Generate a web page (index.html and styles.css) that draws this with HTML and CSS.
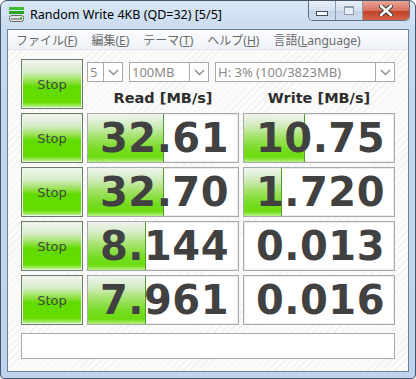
FILE: index.html
```html
<!DOCTYPE html>
<html lang="ja">
<head>
  <meta charset="UTF-8">
  <title>Random Write 4KB (QD=32) [5/5]</title>
  <link rel="stylesheet" href="styles.css">
</head>
<body>
  <div class="window">
    <div class="titlebar">
      <svg class="app-icon" width="17" height="17" viewBox="0 0 17 17">
        <rect x="1" y="1" width="15" height="3" fill="#3cbc2c"/>
        <rect x="1" y="5" width="15" height="3" fill="#2aa51e"/>
        <rect x="1.5" y="9.5" width="14" height="6" rx="2" fill="#e4e4e4" stroke="#6a6a6a"/>
        <rect x="3" y="12" width="11" height="2" fill="#9a9a9a"/>
        <rect x="12" y="11" width="2" height="2" fill="#2ec21e"/>
      </svg>
      <span class="title">Random Write 4KB (QD=32) [5/5]</span>
      <div class="caption-buttons">
        <div class="cap-btn cap-min"><span class="glyph-min"></span></div>
        <div class="cap-btn cap-max"><span class="glyph-max"></span></div>
        <div class="cap-btn cap-close">
          <svg width="14" height="11" viewBox="0 0 14 11">
            <path d="M2 1 L12 10 M12 1 L2 10" stroke="#3c3c3c" stroke-width="4.5" stroke-linecap="round"/>
            <path d="M2 1 L12 10 M12 1 L2 10" stroke="#ffffff" stroke-width="2.4" stroke-linecap="round"/>
          </svg>
        </div>
      </div>
    </div>

    <div class="client">
      <div class="menubar">
        <span class="menu-item">ファイル(<u>F</u>)</span>
        <span class="menu-item">編集(<u>E</u>)</span>
        <span class="menu-item">テーマ(<u>T</u>)</span>
        <span class="menu-item">ヘルプ(<u>H</u>)</span>
        <span class="menu-item">言語(<u>L</u>anguage)</span>
      </div>

      <div class="panel">
        <button class="stop">Stop</button>
        <div class="settings">
          <div class="combos">
            <div class="combo combo-count"><span class="combo-value">5</span><span class="combo-arrow"><svg width="11" height="7" viewBox="0 0 11 7"><path d="M1 1 L5.5 5.5 L10 1" fill="none" stroke="#8a8a8a" stroke-width="1.4"/></svg></span></div>
            <div class="combo combo-size"><span class="combo-value">100MB</span><span class="combo-arrow"><svg width="11" height="7" viewBox="0 0 11 7"><path d="M1 1 L5.5 5.5 L10 1" fill="none" stroke="#8a8a8a" stroke-width="1.4"/></svg></span></div>
            <div class="combo combo-drive"><span class="combo-value">H: 3% (100/3823MB)</span><span class="combo-arrow"><svg width="11" height="7" viewBox="0 0 11 7"><path d="M1 1 L5.5 5.5 L10 1" fill="none" stroke="#8a8a8a" stroke-width="1.4"/></svg></span></div>
          </div>
          <div class="headers">
            <div class="col-head">Read [MB/s]</div>
            <div class="col-head">Write [MB/s]</div>
          </div>
        </div>

        <button class="stop">Stop</button>
        <div class="cell"><div class="bar" style="width: 50%"></div><span class="value">32.61</span></div>
        <div class="cell"><div class="bar" style="width: 40%"></div><span class="value">10.75</span></div>

        <button class="stop">Stop</button>
        <div class="cell"><div class="bar" style="width: 50%"></div><span class="value">32.70</span></div>
        <div class="cell"><div class="bar" style="width: 24.7%"></div><span class="value">1.720</span></div>

        <button class="stop">Stop</button>
        <div class="cell"><div class="bar" style="width: 38%"></div><span class="value">8.144</span></div>
        <div class="cell"><span class="value">0.013</span></div>

        <button class="stop">Stop</button>
        <div class="cell"><div class="bar" style="width: 38%"></div><span class="value">7.961</span></div>
        <div class="cell"><span class="value">0.016</span></div>

        <div class="status"></div>
      </div>
    </div>
  </div>
</body>
</html>
```

FILE: styles.css
```css
body {
  margin: 0;
  font-family: "Noto Sans", "Noto Sans CJK JP", sans-serif;
  background: #ffffff;
}

.window {
  width: 416px;
  height: 379px;
  box-sizing: border-box;
  border: 1px solid #44566c;
  border-radius: 7px 7px 4px 4px;
  background: linear-gradient(#d9e6f5, #c4d8ef 40px, #bfd4ec);
  padding: 0 6px 6px 6px;
  display: flex;
  flex-direction: column;
}

/* title bar */
.titlebar {
  height: 28px;
  display: flex;
  align-items: flex-start;
}

.app-icon {
  margin: 5px 5px 0 1px;
}

.title {
  font-size: 12.5px;
  color: #000;
  margin-top: 5px;
  white-space: nowrap;
}

.caption-buttons {
  margin-left: auto;
  margin-right: -1px;
  display: flex;
  height: 19px;
  border: 1px solid #5e6f86;
  border-top: none;
  border-radius: 0 0 5px 5px;
  overflow: hidden;
}

.cap-btn {
  height: 19px;
  display: flex;
  align-items: center;
  justify-content: center;
}

.cap-min, .cap-max {
  width: 26px;
  background: linear-gradient(#e9eff7, #d5e1ef 50%, #c2d2e6 51%, #cfdcec);
  border-right: 1px solid #8a9bb2;
}

.cap-close {
  width: 46px;
  background: linear-gradient(#e9a596, #d7725e 50%, #c43d22 51%, #d2644a);
}

.glyph-min {
  width: 10px;
  height: 3px;
  margin-top: 6px;
  background: #fff;
  border: 1px solid #3d4d60;
}

.glyph-max {
  width: 8px;
  height: 6px;
  border: 1px solid #8d9bab;
  border-top-width: 2px;
  background: #e8eef5;
}

/* client */
.client {
  flex: 1;
  border: 1px solid #6e8096;
  background: repeating-linear-gradient(135deg, #fbfbfb 0 4px, #f1f1f1 4px 5px);
  display: flex;
  flex-direction: column;
}

.menubar {
  height: 19px;
  display: flex;
  align-items: center;
  padding-left: 1px;
  background: linear-gradient(#fbfcfe, #eef2f8);
  border-bottom: 1px solid #dfe5ed;
}

.menu-item {
  font-size: 12px;
  color: #6a6a6a;
  padding: 0 7px;
  white-space: nowrap;
}

.menu-item u {
  text-decoration-thickness: 1px;
}

/* main panel */
.panel {
  padding: 9px 13px 0 13px;
  display: grid;
  grid-template-columns: 62px 1fr 1fr;
  grid-template-rows: 50px repeat(4, 50px) 30px;
  column-gap: 4px;
  row-gap: 4px;
}

.stop {
  margin: 0;
  padding: 0;
  border: 1px solid #6c7b6a;
  box-shadow: inset 0 0 0 1px #eaf7e0;
  background: linear-gradient(#f3f5f3, #d6ecc8 25%, #9de25c 42%, #62db00 55%, #64dc00 88%, #a8ee6a 96%, #d0f4a8);
  font-family: "DejaVu Sans", sans-serif;
  font-size: 13px;
  color: #404a3c;
}

.settings {
  grid-column: 2 / 4;
  display: flex;
  flex-direction: column;
}

.combos {
  display: flex;
  gap: 6px;
  margin-top: 3px;
  height: 20px;
}

.combo {
  display: flex;
  border: 1px solid #a8a8a8;
  background: #ffffff;
  box-sizing: border-box;
}

.combo-count { width: 36px; }
.combo-size { width: 80px; }
.combo-drive { flex: 1; }

.combo-value {
  flex: 1;
  font-size: 13px;
  line-height: 18px;
  color: #8a8a8a;
  padding-left: 2px;
  white-space: nowrap;
  overflow: hidden;
}

.combo-arrow {
  width: 18px;
  border-left: 1px solid #a8a8a8;
  display: flex;
  align-items: center;
  justify-content: center;
}

.headers {
  margin-top: auto;
  display: grid;
  grid-template-columns: 1fr 1fr;
  column-gap: 4px;
}

.col-head {
  text-align: center;
  font-family: "DejaVu Sans", sans-serif;
  font-weight: bold;
  font-size: 14.5px;
  color: #2e2e2e;
  line-height: 22px;
}

.cell {
  position: relative;
  border: 1px solid #a9a9a9;
  background: #ffffff;
  box-shadow: inset 0 0 0 1px #ececec;
  display: flex;
  align-items: center;
  justify-content: flex-end;
  overflow: hidden;
}

.bar {
  position: absolute;
  left: 0;
  top: 0;
  bottom: 0;
  background: linear-gradient(#f1f3f1, #d0ebbc 25%, #9fe160 50%, #74dc20 75%, #6cdc10 90%, #b8f088);
  border-right: 1px solid #4f9e28;
}

.value {
  position: relative;
  font-family: "DejaVu Sans", sans-serif;
  font-weight: bold;
  font-size: 40px;
  color: #414141;
  padding-right: 9px;
  letter-spacing: 0.5px;
}

.status {
  grid-column: 1 / 4;
  margin-top: 4px;
  border: 1px solid #a9a9a9;
  background: #ffffff;
}
```
